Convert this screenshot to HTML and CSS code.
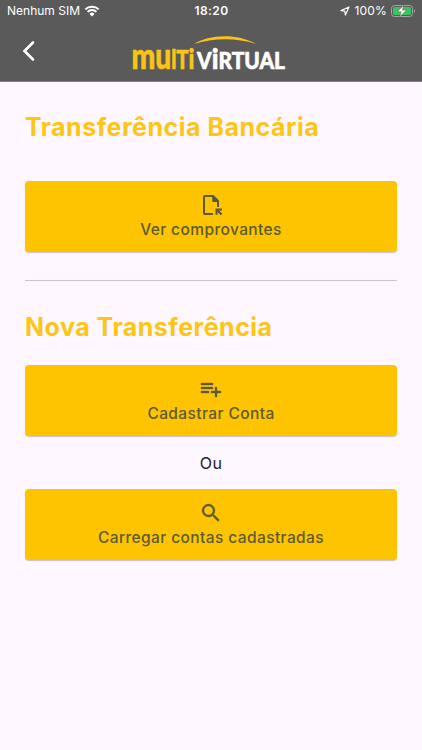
FILE: index.html
```html
<!DOCTYPE html>
<html lang="pt-BR">
<head>
  <meta charset="UTF-8" />
  <meta name="viewport" content="width=device-width, initial-scale=1.0"/>
  <title>Transferência Bancária</title>
  <link rel="stylesheet" href="styles.css">
</head>
<body>
  <header class="header">
    <div class="status-bar">
      <div class="status-left">
        <span class="carrier">Nenhum SIM</span>
        <svg class="wifi" viewBox="0 0 16 12" width="16" height="12">
          <path d="M1.3 4.4a9.6 9.6 0 0 1 13.4 0M3.6 6.9a6.3 6.3 0 0 1 8.8 0" fill="none" stroke="#fff" stroke-width="2"/>
          <path d="M8 11.4 5.500 8.900a3.500 3.500 0 0 1 5 0z" fill="#fff"/>
        </svg>
      </div>
      <span class="clock">18:20</span>
      <div class="status-right">
        <svg class="location" viewBox="0 0 10 10" width="10" height="10">
          <path d="M9 1 1 4.6l3.8.6L5.4 9z" fill="none" stroke="#fff" stroke-width="1.2" stroke-linejoin="round"/>
        </svg>
        <span class="percent">100%</span>
        <svg class="battery" viewBox="0 0 25 14" width="25" height="14">
          <rect x=".5" y="1.500" width="21" height="11" rx="3" fill="none" stroke="#a5a5a5"/>
          <rect x="2" y="3" width="18" height="8" rx="1.700" fill="#34c759"/>
          <path d="M23 5.200c1.500.5 1.500 3.100 0 3.600z" fill="#a5a5a5"/>
          <path d="M12.800 1.200 6.200 7.800h4L8.800 12.800l6.800-6.700h-4.200z" fill="#fff" stroke="#5a5a5a" stroke-width=".5"/>
        </svg>
      </div>
    </div>
    <nav class="nav">
      <button class="back-btn" aria-label="Voltar">
        <svg viewBox="0 0 14 22" width="14" height="22">
          <path d="M12 2.500 3.500 11l8.500 8.500" fill="none" stroke="#fff" stroke-width="2.600" stroke-linecap="round"/>
        </svg>
      </button>
      <svg class="logo" viewBox="0 0 156 58" width="156" height="58">
        <path d="M63 22C77 13 105 10.500 125 22 105 15.500 82 16 63 22z" fill="#f9c416"/>
        <text class="logo-multi" x="0.5" y="47" textLength="63" lengthAdjust="spacingAndGlyphs">mu<tspan class="logo-small">lT</tspan><tspan class="logo-dot">i</tspan></text>
        <text class="logo-virtual" x="66" y="47" textLength="88" lengthAdjust="spacingAndGlyphs">V<tspan class="logo-dot">i</tspan>RTUAL</text>
      </svg>
    </nav>
  </header>

  <main class="content">
    <h1 class="title title-bank">Transferência Bancária</h1>
    <button class="action-btn">
      <svg viewBox="0 0 24 24" width="24" height="24">
        <path d="M14 22H6a2 2 0 0 1-2-2V4a2 2 0 0 1 2-2h8.500L20 7.500V14h-2V8.500h-4.500V4H6v16h8z" fill="currentColor"/>
        <path d="M13.500 3v6h6z" fill="currentColor"/>
        <path d="M16.500 15.500H23v2h-2.900l3.200 3.200-1.500 1.500-3.300-3.300v2.900h-2z" fill="currentColor"/>
      </svg>
      <span class="action-label">Ver comprovantes</span>
    </button>
    <hr class="divider">
    <h2 class="title title-new">Nova Transferência</h2>
    <button class="action-btn">
      <svg viewBox="0 0 24 24" width="24" height="24">
        <path d="M14 10H2v2h12zm0-4H2v2h12zm4 8v-4h-2v4h-4v2h4v4h2v-4h4v-2zM2 16h8v-2H2z" fill="currentColor" stroke="currentColor" stroke-width=".3"/>
      </svg>
      <span class="action-label">Cadastrar Conta</span>
    </button>
    <p class="or">Ou</p>
    <button class="action-btn">
      <svg viewBox="0 0 24 24" width="24" height="24">
        <path d="M15.500 14h-.79l-.28-.27A6.471 6.471 0 0 0 16 9.500 6.500 6.500 0 1 0 9.500 16c1.610 0 3.090-.59 4.230-1.570l.27.28v.79l5 4.990L20.490 19zm-6 0C7.010 14 5 11.990 5 9.500S7.010 5 9.500 5 14 7.010 14 9.500 11.990 14 9.500 14z" fill="currentColor" stroke="currentColor" stroke-width=".3"/>
      </svg>
      <span class="action-label">Carregar contas cadastradas</span>
    </button>
  </main>
</body>
</html>
```

FILE: styles.css
```css
* {
  box-sizing: border-box;
}

body {
  margin: 0;
  min-height: 100vh;
  background-color: #fef7ff;
  font-family: Inter, "Liberation Sans", sans-serif;
}

.header {
  height: 82px;
  background-color: #5a5a5a;
  border-bottom: 1px solid #858187;
  color: #fff;
}

.status-bar {
  display: grid;
  grid-template-columns: 1fr auto 1fr;
  align-items: center;
  height: 22px;
  padding: 0 6px 0 7px;
  font-size: 12px;
  line-height: 22px;
}

.status-left,
.status-right {
  display: flex;
  align-items: center;
}

.status-left {
  gap: 4px;
}

.status-right {
  justify-content: flex-end;
  gap: 4px;
}

.percent {
  letter-spacing: 0.2px;
}

.clock {
  font-weight: 600;
  letter-spacing: 0.4px;
}

.nav {
  display: grid;
  grid-template-columns: 110px 156px 1fr;
  align-items: center;
  height: 58px;
  padding-left: 21px;
}

.back-btn {
  display: flex;
  width: 14px;
  padding: 0;
  border: none;
  background: none;
}

.logo {
  overflow: visible;
  font-family: Lato, sans-serif;
  font-weight: 900;
}

.logo-multi {
  font-size: 36px;
  fill: #f9c416;
  stroke: #f9c416;
  stroke-width: 0.6;
}

.logo-virtual {
  font-size: 23px;
  fill: #fff;
  stroke: #fff;
  stroke-width: 0.6;
}

.logo-small {
  font-size: 26px;
}

.logo-dot {
  font-size: 29px;
}

.content {
  display: flex;
  flex-direction: column;
  padding: 30px 25px;
}

.title {
  margin: 0;
  font-size: 25px;
  font-weight: 700;
  line-height: 30px;
  letter-spacing: 0.5px;
  color: #fec514;
}

.action-btn {
  display: flex;
  flex-direction: column;
  align-items: center;
  height: 71px;
  padding: 12px 0 0;
  border: none;
  border-radius: 4px;
  background-color: #ffc400;
  box-shadow: 0 1px 1px rgba(0, 0, 0, 0.22);
  color: #5b5a35;
  font-family: inherit;
  font-size: 15.5px;
  font-weight: 500;
  line-height: 24px;
  letter-spacing: 0.4px;
}

.action-label {
  padding-top: 1px;
}

.title-bank {
  margin-bottom: 39px;
}

.divider {
  width: 100%;
  height: 1px;
  margin: 28px 0 31px;
  border: none;
  background-color: #cac4d0;
}

.title-new {
  margin-bottom: 23px;
}

.or {
  margin: 15px 0 14px;
  font-size: 16px;
  line-height: 24px;
  letter-spacing: 0.3px;
  text-align: center;
  color: #1d1b20;
}
```
